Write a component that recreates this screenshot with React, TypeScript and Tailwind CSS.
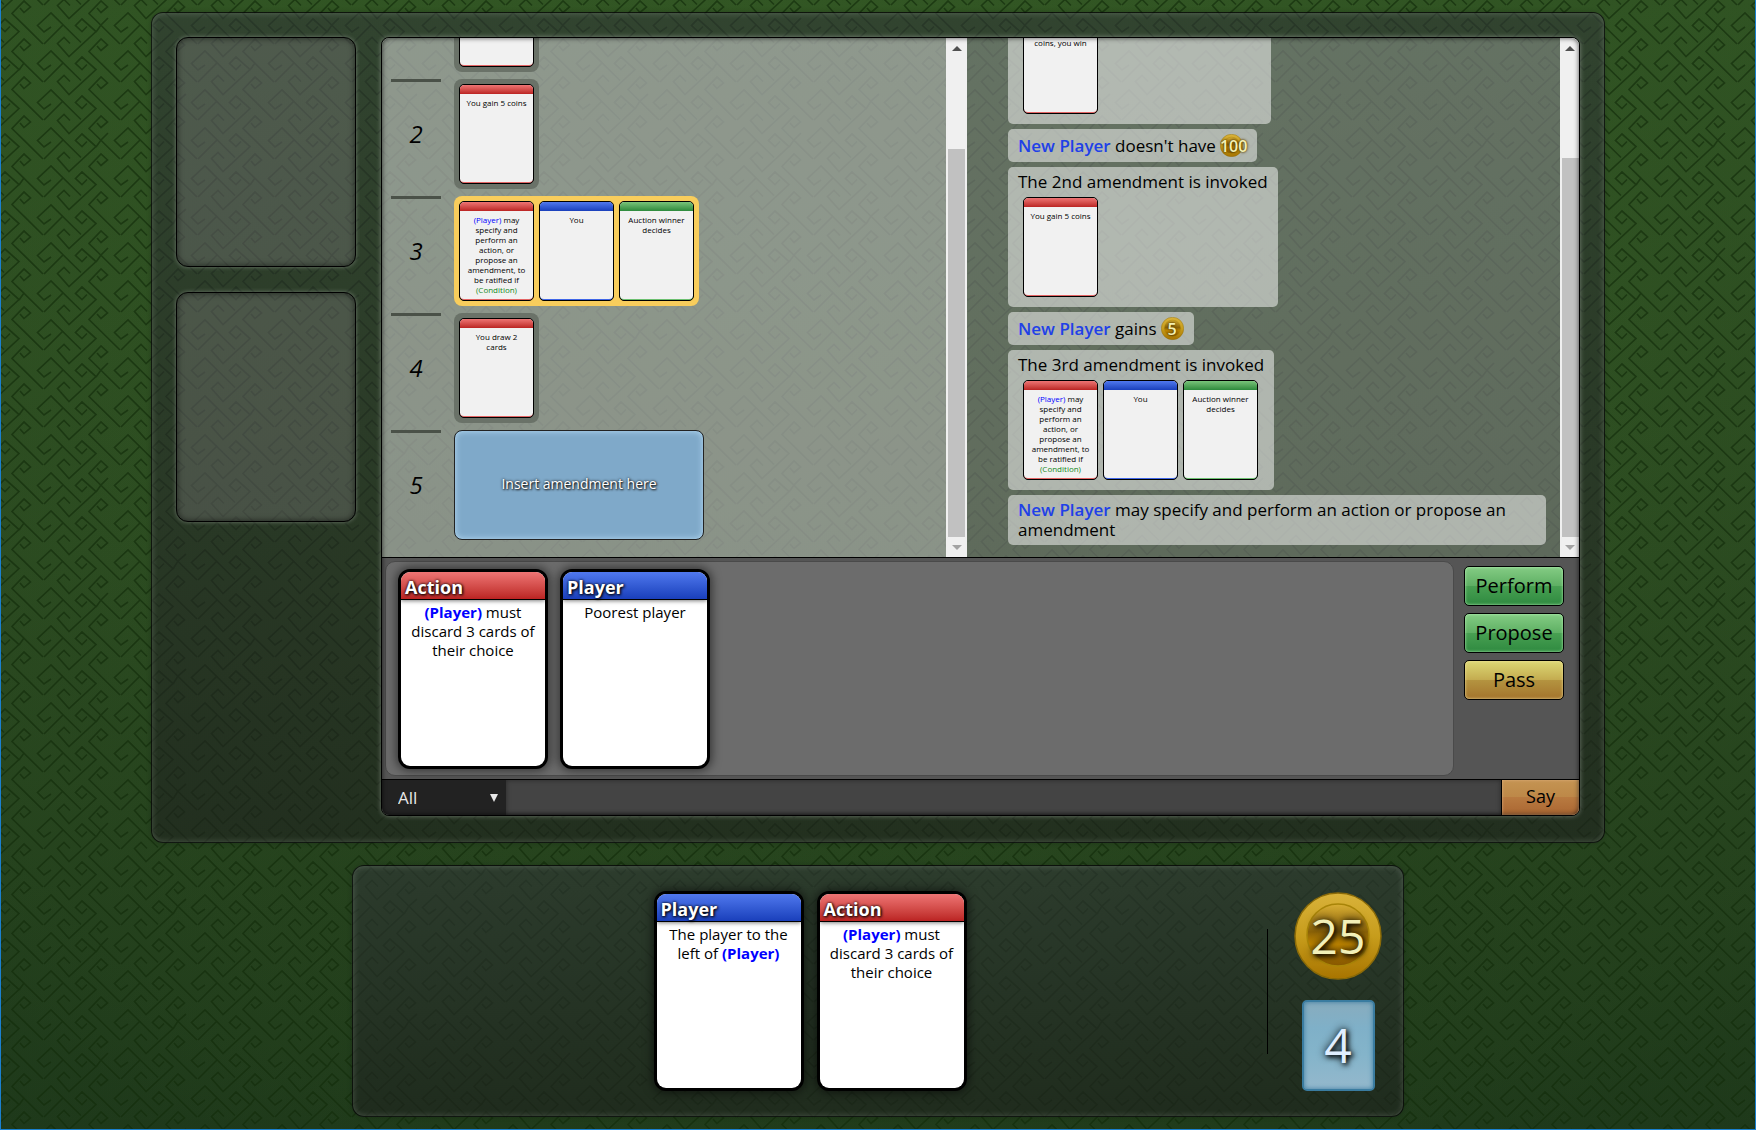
import type { ReactNode } from "react";

type Kind = "action" | "player" | "condition";

const headerFill: Record<Kind, string> = {
  action: "bg-linear-to-b from-[#ee7474] to-[#bb2222]",
  player: "bg-linear-to-b from-[#5078ee] to-[#1a3fbb]",
  condition: "bg-linear-to-b from-[#78c47a] to-[#2c8a3c]",
};

const bottomEdge: Record<Kind, string> = {
  action: "border-[#e46464]",
  player: "border-[#3f66e8]",
  condition: "border-[#6cc070]",
};

const title: Record<Kind, string> = {
  action: "Action",
  player: "Player",
  condition: "Condition",
};

const P = () => <span className="font-bold text-[#0000ff]">(Player)</span>;

function SpiralBackground() {
  return (
    <svg className="absolute inset-0 h-full w-full" aria-hidden="true">
      <defs>
        <g id="spirals" fill="none" stroke="#122c0a" strokeWidth="1.7">
          <path d="M27 -36 L20 -31 L13.500 -37.500 L27 -50 L57 -20.500" />
          <path d="M46 -19.500 L40 -25.500 L33.500 -19.500 L45 -6.500 L72 -31.500 L58 -44 L51.500 -37.500 L58 -31.500 L63 -36.500" />
          <path d="M73 -17 L77 -12.500 L83.500 -18 L77 -24 L65 -11.500 L96 19" />
          <path d="M20 19 L39 0" />
        </g>
        <pattern id="maze" width="231" height="115" patternUnits="userSpaceOnUse" patternTransform="translate(23 63)">
          {[-77, 0, 77, 154, 231].map((x) =>
            [-38, 0, 38, 77, 115, 153].map((y) => <use key={`${x}/${y}`} href="#spirals" x={x} y={y} />),
          )}
          <path
            d="M72 -31 L77 -38 M-5 7 L0 0 M72 84 L77 77 L84 70 M149 46 L154 38 L162 31 M226 7 L231 0 M226 122 L231 115 L238 108 M0 0 L8 -7"
            fill="none"
            stroke="#122c0a"
            strokeWidth="1.7"
          />
        </pattern>
        <linearGradient id="felt" x1="0" y1="0" x2="0" y2="1">
          <stop offset="0" stopColor="#305323" />
          <stop offset="0.5" stopColor="#2a4920" />
          <stop offset="1" stopColor="#1f391a" />
        </linearGradient>
        <radialGradient id="glow" cx="0.5" cy="0.35" r="0.75">
          <stop offset="0" stopColor="#4a7a2c" stopOpacity="0.25" />
          <stop offset="0.7" stopColor="#3a6424" stopOpacity="0.05" />
          <stop offset="1" stopColor="#1c3a1c" stopOpacity="0.2" />
        </radialGradient>
      </defs>
      <rect width="100%" height="100%" fill="url(#felt)" />
      <rect width="100%" height="100%" fill="url(#glow)" />
      <rect width="100%" height="100%" fill="url(#maze)" opacity="0.65" />
    </svg>
  );
}

function MiniCard({ kind, children }: { kind: Kind; children?: ReactNode }) {
  return (
    <div className="h-[100px] w-[75px] shrink-0 overflow-hidden rounded-[5px] border border-black bg-black">
      <div className={`flex h-full flex-col overflow-hidden rounded-[4px] border-b bg-[#f1f1f1] ${bottomEdge[kind]}`}>
        <div className={`h-[9px] shrink-0 ${headerFill[kind]}`} />
        <p className="px-[5px] pt-1 text-center text-[8px] leading-[10px] text-black">{children}</p>
      </div>
    </div>
  );
}

function BigCard({ kind, children }: { kind: Kind; children: ReactNode }) {
  return (
    <article className="h-[200px] w-[150px] shrink-0 rounded-xl border-[3px] border-black bg-black shadow-[0_0_10px_2px_rgba(0,0,0,0.5)]">
      <div className="h-full overflow-hidden rounded-[9px] bg-white">
        <h3
          className={`flex h-7 items-center border-b border-black px-1 pt-0.5 text-[18px] leading-6 font-bold text-white shadow-[0_1px_4px_rgba(0,0,0,0.5)] [text-shadow:0_0_3px_#000,1px_1px_3px_#000] ${headerFill[kind]}`}
        >
          {title[kind]}
        </h3>
        <p className="px-1 pt-[3px] text-center text-[15px] leading-[19px] text-black">{children}</p>
      </div>
    </article>
  );
}

function SpecifyCards() {
  return (
    <>
      <MiniCard kind="action">
        <span className="text-[#0000ff]">(Player)</span> may specify and perform an action, or propose an amendment, to
        be ratified if <span className="text-[#138a1c]">(Condition)</span>
      </MiniCard>
      <MiniCard kind="player">You</MiniCard>
      <MiniCard kind="condition">Auction winner decides</MiniCard>
    </>
  );
}

function Amendment({ n, children }: { n: number; children: ReactNode }) {
  return (
    <li className="flex h-[110px] shrink-0 gap-[13px]">
      <div className="flex w-[50px] items-center justify-center border-t-[3px] border-[#4a5148] pb-1 text-2xl text-black italic">
        {n}
      </div>
      {children}
    </li>
  );
}

const slotBox = "flex h-full gap-[5px] rounded-lg p-[5px]";

function Scrollbar({ thumb, side }: { thumb: string; side: string }) {
  return (
    <div className={`flex shrink-0 flex-col bg-[#f0f0f0] ${side}`} aria-hidden="true">
      <div className="flex h-5 items-center justify-center">
        <span className="border-x-[5px] border-b-[5px] border-x-transparent border-b-[#505050]" />
      </div>
      <div className={`grow bg-[#c1c1c1] ${thumb}`} />
      <div className="flex h-5 items-center justify-center">
        <span className="border-x-[5px] border-t-[5px] border-x-transparent border-t-[#a3a3a3]" />
      </div>
    </div>
  );
}

function CoinFace({ className }: { className: string }) {
  return (
    <svg viewBox="0 0 88 88" className={className} aria-hidden="true">
      <defs>
        <linearGradient id="rim" x1="0" y1="0" x2="0" y2="1">
          <stop offset="0" stopColor="#d9b23a" />
          <stop offset="0.5" stopColor="#c79d1c" />
          <stop offset="1" stopColor="#a87400" />
        </linearGradient>
        <linearGradient id="dish" x1="0" y1="0" x2="0" y2="1">
          <stop offset="0" stopColor="#d8ae34" />
          <stop offset="0.45" stopColor="#8a6208" />
          <stop offset="0.65" stopColor="#c08600" />
          <stop offset="1" stopColor="#855600" />
        </linearGradient>
      </defs>
      <circle cx="44" cy="44" r="43" fill="url(#rim)" stroke="#8a6a08" strokeWidth="1.500" />
      <circle cx="44" cy="43" r="31" fill="url(#dish)" stroke="#a88408" strokeWidth="1.500" />
    </svg>
  );
}

function Coin({ value }: { value: number }) {
  return (
    <span className="relative inline-flex h-[23px] min-w-[23px] items-center justify-center align-middle">
      <CoinFace className="absolute top-0 left-0 h-[23px] w-[23px]" />
      <span className="relative text-base leading-5 font-semibold text-[#f4f0b4] [text-shadow:0_0_2px_#5a4000,0_0_3px_#5a4000]">
        {value}
      </span>
    </span>
  );
}

function Message({ children }: { children: ReactNode }) {
  return <li className="max-w-full shrink-0 rounded-[5px] bg-white/50 px-[10px] py-[5px]">{children}</li>;
}

const Name = () => <span className="font-semibold text-[#2040e8]">New Player</span>;

function MessageCards({ children }: { children: ReactNode }) {
  return <div className="m-[5px] flex gap-[5px]">{children}</div>;
}

const panel =
  "rounded-xl border border-black/60 bg-linear-to-b from-[#32363a]/55 to-[#1f1f20]/55 shadow-[inset_0_0_6px_rgba(255,255,255,0.2),0_0_5px_rgba(0,0,0,0.2)]";

const slot =
  "h-[230px] rounded-xl border border-black bg-[#d8c8d8]/18 shadow-[inset_0_0_6px_rgba(0,0,0,0.6),0_0_4px_rgba(255,255,255,0.3)]";

const actionButton =
  "h-10 w-full rounded-[5px] border border-black text-[20px] leading-6 text-black";
const green =
  "bg-[linear-gradient(#84cc84,#5fb064_49%,#48a052_50%,#2f8a40)] shadow-[inset_0_0_3px_#b8f0b8]";
const gold =
  "bg-[linear-gradient(#dcd874,#c4ac50_49%,#b49440_50%,#a4742c)] shadow-[inset_0_0_3px_#f0e0a0]";

export default function App() {
  return (
    <div className="relative isolate flex min-h-screen flex-col items-center gap-[22px] overflow-hidden border-x border-b border-[#1a80d0] pt-3 font-['Trebuchet_MS','Open_Sans',sans-serif] text-black">
      <SpiralBackground />

      <main className={`relative flex w-full max-w-[1454px] gap-[25px] px-6 pt-6 pb-[26px] ${panel}`}>
        <aside className="flex w-[180px] shrink-0 flex-col gap-[25px]">
          <div className={slot} />
          <div className={slot} />
        </aside>

        <section className="relative flex min-w-0 grow flex-col overflow-hidden rounded-lg border border-black bg-white/25 shadow-[0_0_5px_rgba(255,255,255,0.35)]">
          <div className="flex h-[520px] border-b border-black">
            <div className="flex w-[585px] shrink-0 bg-white/27">
              <ol className="flex min-w-0 grow flex-col justify-end gap-[7px] overflow-hidden pb-[17px] pl-[9px]">
                <Amendment n={1}>
                  <div className={`${slotBox} bg-[#6a7268]`}>
                    <MiniCard kind="action">If you have 100 coins, you win</MiniCard>
                  </div>
                </Amendment>
                <Amendment n={2}>
                  <div className={`${slotBox} bg-[#6a7268]`}>
                    <MiniCard kind="action">You gain 5 coins</MiniCard>
                  </div>
                </Amendment>
                <Amendment n={3}>
                  <div className={`${slotBox} bg-[#f8cd5c]`}>
                    <SpecifyCards />
                  </div>
                </Amendment>
                <Amendment n={4}>
                  <div className={`${slotBox} bg-[#6a7268]`}>
                    <MiniCard kind="action">You draw 2 cards</MiniCard>
                  </div>
                </Amendment>
                <Amendment n={5}>
                  <button className="h-full w-[250px] rounded-lg border border-[#222] bg-[#7fa9c9] pb-1 text-[14px] text-white shadow-[inset_0_0_6px_#b8dcf4] [text-shadow:0_0_3px_#000,1px_1px_2px_#222]">
                    Insert amendment here
                  </button>
                </Amendment>
              </ol>
              <Scrollbar side="w-[21px]" thumb="mx-0.5 mt-[91px]" />
            </div>

            <div className="flex min-w-0 grow">
              <ul className="flex min-w-0 grow flex-col items-start justify-end gap-[5px] overflow-hidden pr-[14px] pb-3 pl-[41px] text-[17px] leading-5">
                <Message>
                  The 1st amendment is invoked
                  <MessageCards>
                    <MiniCard kind="action">If you have 100 coins, you win</MiniCard>
                  </MessageCards>
                </Message>
                <Message>
                  <span className="flex items-center gap-1">
                    <span>
                      <Name /> doesn't have
                    </span>
                    <Coin value={100} />
                  </span>
                </Message>
                <Message>
                  The 2nd amendment is invoked
                  <MessageCards>
                    <MiniCard kind="action">You gain 5 coins</MiniCard>
                  </MessageCards>
                </Message>
                <Message>
                  <span className="flex items-center gap-1">
                    <span>
                      <Name /> gains
                    </span>
                    <Coin value={5} />
                  </span>
                </Message>
                <Message>
                  The 3rd amendment is invoked
                  <MessageCards>
                    <SpecifyCards />
                  </MessageCards>
                </Message>
                <Message>
                  <Name /> may specify and perform an action or propose an amendment
                </Message>
              </ul>
              <Scrollbar side="w-[19px]" thumb="ml-0.5 mt-[100px]" />
            </div>
          </div>

          <div className="flex h-[221px] bg-[#555] py-[3px] pl-[3px]">
            <div className="flex min-w-0 grow gap-3 rounded-[10px] border border-[#4a4a4a] bg-[#6c6c6c] px-3 py-[7px]">
              <BigCard kind="action">
                <P /> must discard 3 cards of their choice
              </BigCard>
              <BigCard kind="player">Poorest player</BigCard>
            </div>
            <div className="flex w-[125px] shrink-0 flex-col gap-[7px] pt-[5px] pr-[15px] pl-[10px]">
              <button className={`${actionButton} ${green}`}>Perform</button>
              <button className={`${actionButton} ${green}`}>Propose</button>
              <button className={`${actionButton} ${gold}`}>Pass</button>
            </div>
          </div>

          <form className="flex h-9 border-t border-black bg-[#444]" onSubmit={(e) => e.preventDefault()}>
            <div className="relative w-[124px] shrink-0">
              <select
                aria-label="Send to"
                className="h-full w-full appearance-none bg-[#222] pl-4 text-[17px] font-medium text-[#e8e8e8] outline-none"
              >
                <option>All</option>
              </select>
              <span className="pointer-events-none absolute top-3.5 right-2 border-x-4 border-t-8 border-x-transparent border-t-[#e8e8e8]" />
            </div>
            <input
              aria-label="Message"
              className="min-w-0 grow bg-transparent px-2 text-white shadow-[inset_0_0_5px_rgba(0,0,0,0.4)] outline-none"
            />
            <button className="w-[78px] shrink-0 border-l border-black bg-[linear-gradient(#c49452,#bd8848_49%,#b87a40_50%,#aa6632)] pb-0.5 text-[18px] text-black shadow-[inset_0_0_3px_#e0b080]">
              Say
            </button>
          </form>
          <div className="pointer-events-none absolute inset-0 rounded-lg shadow-[inset_0_0_5px_rgba(0,0,0,0.7)]" />
        </section>
      </main>

      <section className={`relative flex w-full max-w-[1052px] items-center py-[25px] pr-5 ${panel}`}>
        <div className="flex min-w-0 grow justify-center gap-[13px] px-4">
          <BigCard kind="player">
            The player to the left of <P />
          </BigCard>
          <BigCard kind="action">
            <P /> must discard 3 cards of their choice
          </BigCard>
        </div>
        <div className="h-[125px] w-px shrink-0 bg-black" />
        <div className="flex w-[115px] shrink-0 flex-col items-center gap-5 pl-[25px]">
          <div className="relative flex h-[88px] w-[88px] items-center justify-center">
            <CoinFace className="absolute inset-0 h-full w-full" />
            <span className="relative text-5xl text-[#f2f0b8] [text-shadow:0_0_8px_#000,2px_2px_5px_#000]">25</span>
          </div>
          <div className="flex h-[91px] w-[73px] items-center justify-center rounded-[5px] border-2 border-[#3a7ca0] bg-[linear-gradient(#88acbe,#7fb0c8_30%,#84b4ca_60%,#94b8cc)] shadow-[inset_0_0_5px_#3a7ca0]">
            <span className="text-5xl text-[#e0eeff] [text-shadow:0_0_8px_#000,2px_2px_5px_#000]">4</span>
          </div>
        </div>
      </section>
    </div>
  );
}
